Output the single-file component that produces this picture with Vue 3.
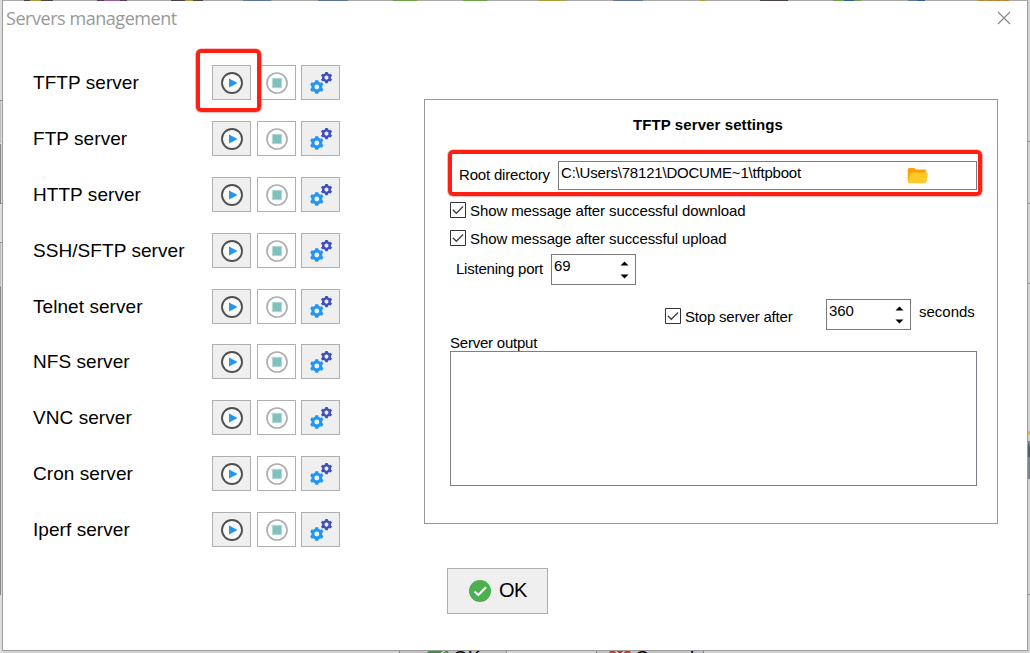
<script setup>
import { ref } from 'vue'

const servers = ['TFTP', 'FTP', 'HTTP', 'SSH/SFTP', 'Telnet', 'NFS', 'VNC', 'Cron', 'Iperf']
const root = ref('C:\\Users\\78121\\DOCUME~1\\tftpboot')

const gear = (cx, cy, r, teeth) => {
  const pts = []
  const step = (Math.PI * 2) / teeth
  for (let i = 0; i < teeth; i++) {
    const a = i * step - Math.PI / 2
    for (const [off, k] of [[-0.32, 0.78], [-0.2, 1], [0.2, 1], [0.32, 0.78]]) {
      pts.push(`${(cx + Math.cos(a + off * step) * r * k).toFixed(2)} ${(cy + Math.sin(a + off * step) * r * k).toFixed(2)}`)
    }
  }
  const h = r * 0.35
  return `M${pts.join('L')}ZM${cx - h} ${cy}a${h} ${h} 0 1 0 ${2 * h} 0a${h} ${h} 0 1 0 ${-2 * h} 0Z`
}
const bigGear = gear(14.8, 21, 7, 6)
const smallGear = gear(24.5, 11.6, 5.8, 6)
</script>

<template>
  <div class="screen">
    <svg class="backdrop" width="1030" height="653" aria-hidden="true">
      <rect width="1030" height="653" fill="#d3d3d3" />
      <rect width="3" height="653" fill="#dedede" />
      <path d="M0 100.5h3M0 203.5h3M0 242.5h3M1027 141.5h3M1027 203.5h3M1027 283.5h3M1027 594.5h3" stroke="#929292" />
      <path d="M.5 144v60M.5 286v309" stroke="#858585" />
      <path d="M.5 101v42M.5 243v42" stroke="#bdbdbd" />
      <rect x="1027" y="441" width="3" height="38" fill="#738792" />
      <path d="M1027 441l3 6v10h-3z" fill="#4b626d" />
      <path d="M1027 433l3-2.5v5z" fill="#e5b020" />
      <rect x="399" y="650" width="108" height="3" fill="#c3c3c3" />
      <rect x="596" y="650" width="108" height="3" fill="#c3c3c3" />
      <path d="M399.5 650v3M506.5 650v3M596.5 650v3M703.5 650v3" stroke="#858585" />
      <circle cx="438" cy="660" r="13" fill="#3f9144" />
      <path d="M441 653.5l4-3" stroke="#d0e0d0" stroke-width="1.5" />
      <circle cx="620" cy="660" r="13" fill="#c63b30" />
      <path d="M615.5 651l3 3M624.5 651l-3 3" stroke="#e5c5c2" stroke-width="1.5" />
      <text x="453" y="664" class="behind">OK</text>
      <text x="635" y="664" class="behind">Cancel</text>
    </svg>

    <section class="dialog">
      <svg class="topedge" width="1025" height="1" aria-hidden="true">
        <rect width="1025" height="1" fill="#a9a6a6" />
        <path d="M21 .5h29M94 .5h30M168 .5h32M757 .5h28" stroke="#4b4346" />
        <path d="M27 .5h11M182 .5h8M535 .5h28M697 .5h6" stroke="#b29a3c" />
        <path d="M101 .5h16" stroke="#9a58a0" />
        <path d="M240 .5h28M315 .5h30M610 .5h30M905 .5h16" stroke="#5c7796" />
        <path d="M390 .5h24M460 .5h24M830 .5h28" stroke="#68a04c" />
        <path d="M841 .5h10M914 .5h8" stroke="#315b98" />
        <path d="M975 .5h32" stroke="#b48338" stroke-dasharray="7 1" />
      </svg>
      <header class="titlebar">
        <span class="caption">Servers management</span>
        <svg class="close" width="14" height="14" viewBox="0 0 14 14"><path d="M1 1l12 12M13 1L1 13" stroke="#858585" stroke-width="1.1" /></svg>
      </header>

      <div class="main">
        <ul class="servers">
          <li v-for="(s, i) in servers" :key="s">
            <span class="name">{{ s }} server</span>
            <div class="tools">
              <button class="tool">
                <svg width="37" height="33" viewBox="0 0 37 33">
                  <circle cx="19" cy="17" r="10" fill="#fafafa" stroke="#505050" stroke-width="1.9" />
                  <path d="M16 12.6v9l8.6-4.5z" fill="#2196f3" />
                </svg>
              </button>
              <button class="tool off">
                <svg width="37" height="33" viewBox="0 0 37 33">
                  <circle cx="19" cy="17" r="10" fill="#fff" stroke="#aeaeae" stroke-width="1.7" />
                  <path d="M14.3 12.3h9.4v9.4h-9.4z" fill="#80c0bd" stroke="#b5dcda" stroke-width=".8" />
                </svg>
              </button>
              <button class="tool">
                <svg width="37" height="33" viewBox="0 0 37 33">
                  <path :d="bigGear" fill="#2196f3" fill-rule="evenodd" />
                  <path :d="smallGear" fill="#3f51b5" fill-rule="evenodd" />
                </svg>
              </button>
              <i v-if="i === 0" class="mark mark-play"></i>
            </div>
          </li>
        </ul>

        <div class="panel">
          <h2>TFTP server settings</h2>
          <div class="root-row">
            <label>Root directory</label>
            <div class="field">
              <span>{{ root }}</span>
              <svg class="folder" width="22" height="18" viewBox="0 0 22 18">
                <path d="M.8 3Q.8 1 2.5 1h4.7l1.6 1.5h8.7q1.7 0 1.7 1.7V14H.8z" fill="#ffa000" />
                <path d="M4.7 5.4h14.9q1.7 0 1.3 1.5l-1.6 8q-.3 1.3-1.6 1.3H2.2q-1.4 0-1.2-1.2L3.3 6.5q.3-1.1 1.4-1.1z" fill="#ffca28" />
              </svg>
            </div>
            <i class="mark mark-root"></i>
          </div>
          <div class="check first">
            <svg width="16" height="16" viewBox="0 0 16 16"><path d="M.5.5h15v15H.5z" fill="#fff" stroke="#333" /><path d="M2.8 7.8l3.5 3.5 6.8-6.8" fill="none" stroke="#404040" stroke-width="1.3" /></svg>
            <span>Show message after successful download</span>
          </div>
          <div class="check">
            <svg width="16" height="16" viewBox="0 0 16 16"><path d="M.5.5h15v15H.5z" fill="#fff" stroke="#333" /><path d="M2.8 7.8l3.5 3.5 6.8-6.8" fill="none" stroke="#404040" stroke-width="1.3" /></svg>
            <span>Show message after successful upload</span>
          </div>
          <div class="port-row">
            <label>Listening port</label>
            <div class="spin">
              <span>69</span>
              <svg width="9" height="19" viewBox="0 0 9 19"><path d="M.5 4.5L4.5.5l4 4zM.5 13.5l4 4 4-4z" fill="#000" /></svg>
            </div>
          </div>
          <div class="stop-row">
            <div class="check stop">
              <svg width="16" height="16" viewBox="0 0 16 16"><path d="M.5.5h15v15H.5z" fill="#fff" stroke="#333" /><path d="M2.8 7.8l3.5 3.5 6.8-6.8" fill="none" stroke="#404040" stroke-width="1.3" /></svg>
              <span>Stop server after</span>
            </div>
            <div class="spin">
              <span>360</span>
              <svg width="9" height="19" viewBox="0 0 9 19"><path d="M.5 4.5L4.5.5l4 4zM.5 13.5l4 4 4-4z" fill="#000" /></svg>
            </div>
            <span class="unit">seconds</span>
          </div>
          <label class="out-label">Server output</label>
          <div class="output"></div>
        </div>
      </div>

      <button class="ok">
        <svg width="22" height="22" viewBox="0 0 22 22"><circle cx="11" cy="11" r="11" fill="#4caf50" /><path d="M5.6 11.4l3.7 3.7 7.8-7.9" fill="none" stroke="#fff" stroke-width="2.1" /></svg>
        <span>OK</span>
      </button>
    </section>
  </div>
</template>

<style>
body { margin: 0; overflow: hidden; }
</style>

<style scoped>
* { box-sizing: border-box; }
.screen {
  position: relative;
  width: 1030px;
  height: 653px;
  padding-left: 2px;
  overflow: hidden;
  font: 15px/20px "Liberation Sans", Arial, sans-serif;
  color: #000;
}
.backdrop { position: absolute; left: 0; top: 0; }
.behind { font-size: 19px; fill: #000; }
.dialog {
  position: relative;
  width: 1026px;
  height: 651px;
  background: #fff;
  border: 1px solid #9c9c9c;
  border-top: 0;
}
.topedge { display: block; }
.titlebar {
  display: flex;
  justify-content: space-between;
  height: 34px;
  padding: 0 16px 0 3px;
}
.caption {
  font: 18px/34px "Open Sans", "Noto Sans", sans-serif;
  letter-spacing: -0.45px;
  color: #999;
  white-space: nowrap;
}
.close { margin-top: 10px; }
.main { display: flex; justify-content: space-between; padding: 12px 29px 0 30px; }
.servers { list-style: none; margin: 7.6px 0 0; padding: 0; width: 307px; }
.servers li { display: flex; align-items: center; justify-content: space-between; height: 55.9px; }
.name { padding-top: 1px; font-size: 19px; line-height: 24px; letter-spacing: 0.06px; white-space: nowrap; }
.tools { position: relative; display: flex; gap: 5.5px; }
.tool {
  width: 39px;
  height: 35px;
  padding: 0;
  border: 1px solid #b0b0b0;
  background: #efefef;
}
.tool svg { display: block; }
.off { background: #fff; }
.mark {
  position: absolute;
  border: 4px solid #ff2013;
  border-radius: 5px;
  box-shadow: 0 0 0 0.6px rgba(255, 32, 19, 0.55);
  pointer-events: none;
}
.mark-play { left: -16px; top: -16px; width: 65px; height: 63px; }
.mark-root { left: 23px; top: 1px; width: 534px; height: 46px; }
.panel {
  width: 574px;
  height: 425px;
  margin-top: 52px;
  border: 1px solid #979797;
  letter-spacing: -0.1px;
  white-space: nowrap;
}
h2 { margin: 15px 0 0; padding-right: 6px; font-size: 15px; line-height: 20px; letter-spacing: 0.1px; text-align: center; }
.root-row { position: relative; display: flex; height: 47px; margin-top: 14px; padding: 12px 0 0 34px; }
.root-row label { width: 99px; line-height: 28px; letter-spacing: -0.18px; }
.field { display: flex; width: 419px; height: 29px; padding: 1px 0 0 2px; border: 1px solid #7a7a7a; letter-spacing: -0.2px; }
.field span { width: 346px; }
.folder { margin-top: 4px; }
.check { display: flex; gap: 4px; height: 16px; margin: 12px 0 0 25px; line-height: 18px; }
.check.first { margin-top: 6px; }
.port-row { display: flex; margin-top: 8px; padding-left: 31px; }
.port-row label { width: 95px; line-height: 30px; letter-spacing: -0.22px; }
.spin {
  display: flex;
  justify-content: space-between;
  width: 85px;
  height: 31px;
  padding: 1px 6px 0 2px;
  border: 1px solid #7a7a7a;
}
.spin svg { margin-top: 5px; }
.stop-row { display: flex; margin-top: 14px; }
.check.stop { width: 161px; margin: 9px 0 0 240px; letter-spacing: -0.2px; }
.unit { margin: 3px 0 0 8px; letter-spacing: 0; }
.out-label { display: block; margin: 3px 0 0 25px; letter-spacing: -0.22px; }
.output { width: 527px; height: 135px; margin: -2px 0 0 25px; border: 1px solid #7c7f87; }
.ok {
  display: flex;
  align-items: center;
  gap: 8px;
  width: 101px;
  height: 46px;
  margin: 10.3px 0 0 444px;
  padding: 0 0 0 21px;
  border: 1px solid #adadad;
  background: #efefef;
  color: #000;
  font: 20px "Liberation Sans", Arial, sans-serif;
  letter-spacing: -0.5px;
}
</style>
